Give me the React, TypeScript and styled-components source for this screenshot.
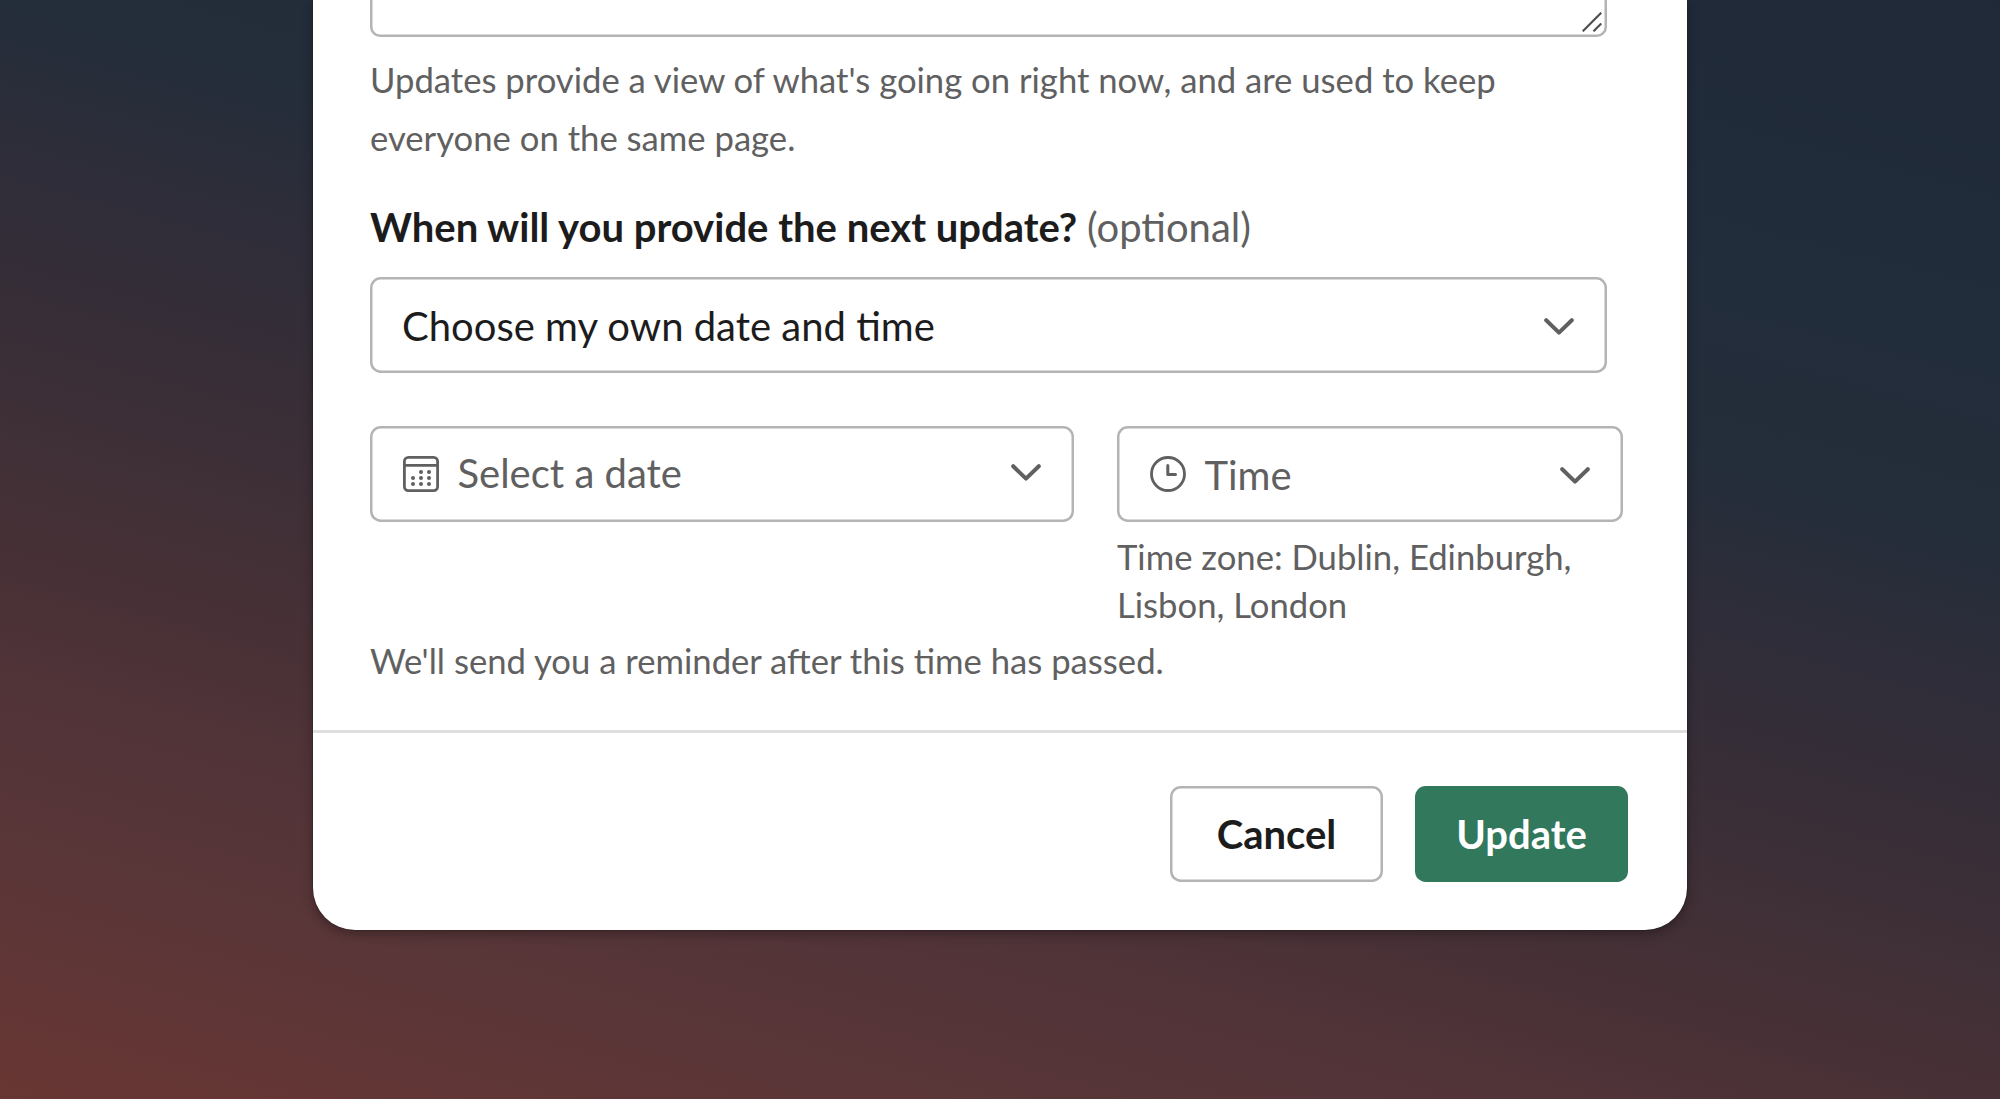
import React from 'react';
import styled, { createGlobalStyle } from 'styled-components';

const GlobalStyle = createGlobalStyle`
  body {
    margin: 0;
    overflow: hidden;
  }
  * {
    box-sizing: border-box;
  }
`;

const Page = styled.div`
  height: 1099px;
  padding-left: 312.5px;
  overflow: hidden;
  font-family: Lato, 'Liberation Sans', sans-serif;
  color: #1d1c1d;
  background: linear-gradient(
    195deg,
    #1f2937 0%,
    #222d3b 20%,
    #242d3a 33%,
    #2f2d39 43%,
    #382e37 52%,
    #443036 64%,
    #523438 76%,
    #5a3638 85%,
    #683633 100%
  );
`;
const Modal = styled.form`
  width: 1374.5px;
  height: 930px;
  border-radius: 0 0 42px 42px;
  background: #fff;
  box-shadow: 0 0 0 1px rgba(29, 28, 29, 0.3), 0 4px 12px rgba(0, 0, 0, 0.3);
`;
const Body = styled.div`
  height: 730px;
  padding: 0 64px 0 57.5px;
  overflow: hidden;
`;
/* the top of the field is scrolled out of view */
const TextArea = styled.div`
  display: flex;
  align-items: flex-end;
  justify-content: flex-end;
  width: 1237px;
  height: 66.5px;
  margin-top: -30px;
  padding: 0 5px 4.5px 0;
  border-radius: 10px;
  box-shadow: inset 0 0 0 2.5px #b4b4b4;
`;
const Hint = styled.p<{ $lineHeight?: number; $top: number }>`
  margin: ${p => p.$top}px 0 0;
  font-size: 34.67px;
  line-height: ${p => p.$lineHeight || 58.67}px;
  color: #616061;
`;
const Label = styled.div`
  margin: 30.5px 0 20px;
  font-size: 40px;
  font-weight: bold;
  line-height: 58.67px;

  span {
    font-weight: normal;
    color: #616061;
  }
`;
const Select = styled.div<{ $width: number; $muted?: boolean; $lift?: number }>`
  display: flex;
  align-items: center;
  width: ${p => p.$width}px;
  height: 96px;
  padding: ${p => (p.$lift ? 0 : 2)}px 33px ${p => p.$lift || 0}px 32px;
  border-radius: 10.67px;
  box-shadow: inset 0 0 0 2.5px #b4b4b4;
  font-size: 40px;
  line-height: 48px;
  color: ${p => (p.$muted ? '#616061' : '#1d1c1d')};
`;
const Value = styled.span`
  flex: 1;
`;
const FieldIcon = styled.svg<{ $drop?: number }>`
  width: 36px;
  height: 36px;
  margin-left: 1.2px;
  margin-right: 18.3px;
  margin-top: ${p => p.$drop || 0}px;
`;
const Row = styled.div`
  display: flex;
  align-items: flex-start;
  gap: 43px;
  margin-top: 53px;
`;
const TimeColumn = styled.div`
  width: 506px;
`;
const Footer = styled.footer`
  display: flex;
  justify-content: flex-end;
  gap: 32px;
  padding: 53px 59px 0 0;
  border-top: 3px solid #dedede;
`;
const Button = styled.button<{ $primary?: boolean }>`
  width: 213px;
  height: 96px;
  padding: 0;
  border: 0;
  border-radius: 10.67px;
  background: ${p => (p.$primary ? '#31785c' : '#fff')};
  box-shadow: ${p => (p.$primary ? 'none' : 'inset 0 0 0 2.5px #b4b4b4')};
  color: ${p => (p.$primary ? '#fff' : '#1d1c1d')};
  font-family: inherit;
  font-size: 40px;
  font-weight: bold;
`;

const Chevron = () => (
  <svg width="30" height="17" viewBox="0 0 30 17" fill="none">
    <path d="M2.2 2.2L15 14.6L27.8 2.2" stroke="#616061" strokeWidth="4" strokeLinecap="round" strokeLinejoin="round" />
  </svg>
);

const ResizeHandle = () => (
  <svg width="20" height="20" viewBox="0 0 20 20" fill="none" stroke="#505050" strokeWidth="2.2">
    <path d="M0.7 19.3L19.3 0.7M11.5 19.3L19.3 11.5" />
  </svg>
);

const dots = [
  [18, 16],
  [26, 16],
  [10, 22],
  [18, 22],
  [26, 22],
  [10, 28],
  [18, 28],
  [26, 28],
];

const CalendarIcon = () => (
  <FieldIcon viewBox="0 0 36 36" fill="none" stroke="#616061" strokeWidth="2.8" $drop={3}>
    <rect x="1.4" y="1.4" width="33.2" height="33.2" rx="4" />
    <path d="M1.4 9.4H34.6" />
    {dots.map(([x, y]) => (
      <circle key={`${x}-${y}`} cx={x} cy={y} r="2" fill="#616061" stroke="none" />
    ))}
  </FieldIcon>
);

const ClockIcon = () => (
  <FieldIcon viewBox="0 0 36 36" fill="none" stroke="#616061" strokeWidth="2.8" $drop={-3}>
    <circle cx="18" cy="18" r="16.5" />
    <path d="M17.8 9.5V18.6H25.5" strokeWidth="3" strokeLinecap="round" strokeLinejoin="round" />
  </FieldIcon>
);

const App = () => {
  return (
    <Page>
      <GlobalStyle />
      <Modal>
        <Body>
          <TextArea>
            <ResizeHandle />
          </TextArea>
          <Hint $top={14}>
            Updates provide a view of what's going on right now, and are used to keep
            <br />
            everyone on the same page.
          </Hint>
          <Label>
            When will you provide the next update? <span>(optional)</span>
          </Label>
          <Select $width={1237}>
            <Value>Choose my own date and time</Value>
            <Chevron />
          </Select>
          <Row>
            <Select $width={704} $muted $lift={3}>
              <CalendarIcon />
              <Value>Select a date</Value>
              <Chevron />
            </Select>
            <TimeColumn>
              <Select $width={506} $muted>
                <ClockIcon />
                <Value>Time</Value>
                <Chevron />
              </Select>
              <Hint $top={11} $lineHeight={48}>
                Time zone: Dublin, Edinburgh,
                <br />
                Lisbon, London
              </Hint>
            </TimeColumn>
          </Row>
          <Hint $top={3}>We'll send you a reminder after this time has passed.</Hint>
        </Body>
        <Footer>
          <Button type="button">Cancel</Button>
          <Button type="button" $primary>
            Update
          </Button>
        </Footer>
      </Modal>
    </Page>
  );
};

export default App;
